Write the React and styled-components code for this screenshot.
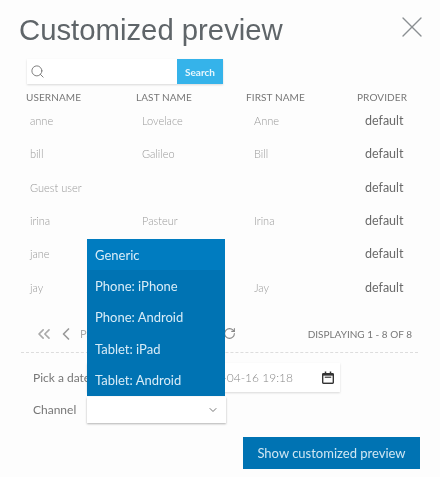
import React from 'react';
import styled, { createGlobalStyle } from 'styled-components';
import { Search, X, ChevronsLeft, ChevronLeft, RotateCw, ChevronDown } from 'lucide-react';

const users = [
  { username: 'anne', last: 'Lovelace', first: 'Anne' },
  { username: 'bill', last: 'Galileo', first: 'Bill' },
  { username: 'Guest user', last: '', first: '' },
  { username: 'irina', last: 'Pasteur', first: 'Irina' },
  { username: 'jane', last: '', first: '' },
  { username: 'jay', last: '', first: 'Jay' },
];

const channels = ['Generic', 'Phone: iPhone', 'Phone: Android', 'Tablet: iPad', 'Tablet: Android'];

const CalendarIcon = () => (
  <svg width="12" height="13" viewBox="0 0 13 14">
    <path d="M3 0.5h1.6v1.5h3.8V0.5H10V2h1.5A1.5 1.5 0 0 1 13 3.500v9a1.500 1.500 0 0 1-1.500 1.500h-10A1.500 1.500 0 0 1 0 12.500v-9A1.500 1.500 0 0 1 1.500 2H3z" fill="#333" />
    <rect x="1.500" y="5" width="10" height="7.500" fill="#fdfdfd" />
    <rect x="3" y="6" width="7" height="1.500" fill="#555" />
  </svg>
);

const App = () => (
  <Page>
    <GlobalStyle />
    <Header>
      <Title>Customized preview</Title>
      <CloseIcon size={36} strokeWidth={0.9} />
    </Header>

    <SearchBar>
      <SearchInput>
        <Search size={15} strokeWidth={1.5} color="#777" />
      </SearchInput>
      <SearchButton>Search</SearchButton>
    </SearchBar>

    <HeaderRow>
      <HeadCell>USERNAME</HeadCell>
      <HeadCell>LAST NAME</HeadCell>
      <HeadCell>FIRST NAME</HeadCell>
      <HeadCell>PROVIDER</HeadCell>
    </HeaderRow>
    {users.map((user) => (
      <Row key={user.username}>
        <Cell>{user.username}</Cell>
        <Cell>{user.last}</Cell>
        <Cell>{user.first}</Cell>
        <Provider>default</Provider>
      </Row>
    ))}

    <Pager>
      <PagerLeft>
        <ChevronsLeft size={20} strokeWidth={2} color="#aaa" />
        <ChevronLeft size={20} strokeWidth={2} color="#999" />
        <PageLabel>Page</PageLabel>
      </PagerLeft>
      <RefreshIcon size={13} strokeWidth={2} color="#888" />
      <Displaying>DISPLAYING 1 - 8 OF 8</Displaying>
    </Pager>
    <Divider />

    <FormRow>
      <FieldLabel>Pick a date</FieldLabel>
      <DateInput>
        <DateValue>2021-04-16 19:18</DateValue>
        <CalendarIcon />
      </DateInput>
    </FormRow>
    <ChannelRow>
      <FieldLabel>Channel</FieldLabel>
      <SelectBox>
        <Menu>
          {channels.map((channel, index) => (
            <MenuItem key={channel} $active={index === 0}>{channel}</MenuItem>
          ))}
        </Menu>
        <ChevronDown size={12} strokeWidth={2} color="#777" />
      </SelectBox>
    </ChannelRow>

    <Footer>
      <ShowButton>Show customized preview</ShowButton>
    </Footer>
  </Page>
);

const GlobalStyle = createGlobalStyle`
  html, body {
    margin: 0;
    background: #fdfdfd;
  }
`;

const Page = styled.div`
  width: 440px;
  height: 477px;
  box-sizing: border-box;
  padding: 12px 20px 0 20px;
  overflow: hidden;
  font-family: "Lato", "Liberation Sans", sans-serif;
  color: #555;
  will-change: transform;
`;

const Header = styled.div`
  display: flex;
  justify-content: space-between;
  align-items: center;
  height: 36px;
`;

const Title = styled.h1`
  margin: 0 0 0 -1px;
  font-family: "Liberation Sans", Arial, sans-serif;
  font-size: 29.300px;
  font-weight: 400;
  color: #5f6569;
`;

const CloseIcon = styled(X)`
  color: #8a8f92;
  margin: -6px -10px 0 0;
`;

const SearchBar = styled.div`
  display: flex;
  width: 196px;
  height: 25px;
  margin: 11px 0 0 7px;
  box-shadow: 0 1px 2px rgba(0, 0, 0, 0.15);
`;

const SearchInput = styled.div`
  flex: 1;
  display: flex;
  align-items: center;
  padding-left: 3px;
  background: #fff;
`;

const SearchButton = styled.div`
  width: 46px;
  display: flex;
  align-items: center;
  justify-content: center;
  background: #35b3ea;
  color: #e8f7fd;
  font-size: 10px;
  font-weight: 700;
`;

const HeaderRow = styled.div`
  display: grid;
  grid-template-columns: 110px 110px 111px 1fr;
  margin: 6px 0 0 6px;
  height: 14px;
  align-items: center;
`;

const HeadCell = styled.div`
  font-size: 10px;
  color: #777;
  letter-spacing: 0.1px;
`;

const Row = styled.div`
  display: grid;
  grid-template-columns: 112px 112px 111px 1fr;
  height: 33.300px;
  margin-left: 10px;
  align-items: center;
`;

const Cell = styled.div`
  font-size: 11px;
  font-weight: 300;
  color: #999;
`;

const Provider = styled.div`
  font-size: 12.500px;
  color: #6a6a6a;
`;

const Pager = styled.div`
  display: flex;
  align-items: center;
  height: 20px;
  margin-top: 20px;
  padding-left: 14px;
`;

const PagerLeft = styled.div`
  display: flex;
  align-items: center;
  gap: 2px;
  width: 189px;
`;

const PageLabel = styled.span`
  margin-left: 2px;
  font-size: 11px;
  color: #aaa;
`;

const RefreshIcon = styled(RotateCw)`
  flex: none;
`;

const Displaying = styled.div`
  margin-left: auto;
  margin-right: 8px;
  font-size: 10px;
  color: #777;
`;

const Divider = styled.div`
  margin: 8px 2px 0 1px;
  border-top: 1px dashed #ddd;
`;

const FormRow = styled.div`
  display: flex;
  align-items: center;
  height: 29px;
  margin: 10px 0 0 13px;
`;

const ChannelRow = styled(FormRow)`
  height: 26px;
  margin-top: 5px;
`;

const FieldLabel = styled.div`
  width: 54px;
  font-size: 12px;
  color: #777;
  white-space: nowrap;
`;

const DateInput = styled.div`
  display: flex;
  align-items: center;
  justify-content: flex-end;
  gap: 29px;
  width: 253px;
  height: 29px;
  box-sizing: border-box;
  padding-right: 6px;
  background: #fff;
  box-shadow: 0 1px 2px rgba(0, 0, 0, 0.15);
`;

const DateValue = styled.span`
  font-size: 12px;
  font-weight: 300;
  color: #888;
`;

const SelectBox = styled.div`
  position: relative;
  display: flex;
  align-items: center;
  justify-content: flex-end;
  width: 139px;
  height: 26px;
  box-sizing: border-box;
  padding-right: 7px;
  background: #fff;
  box-shadow: 0 1px 2px rgba(0, 0, 0, 0.3);
`;

const Menu = styled.div`
  position: absolute;
  left: 0;
  bottom: 100%;
  width: 138px;
  margin-bottom: 1px;
  background: #0073b3;
`;

const MenuItem = styled.div`
  height: 31.400px;
  display: flex;
  align-items: center;
  padding-left: 8px;
  font-size: 13px;
  color: #d8ecf7;
  background: ${(props) => (props.$active ? '#007cc0' : 'transparent')};
`;

const Footer = styled.div`
  display: flex;
  justify-content: flex-end;
  margin-top: 14px;
`;

const ShowButton = styled.div`
  width: 177px;
  height: 32px;
  display: flex;
  align-items: center;
  justify-content: center;
  background: #0073b3;
  color: #cfe6f3;
  font-size: 13px;
`;

export default App;
